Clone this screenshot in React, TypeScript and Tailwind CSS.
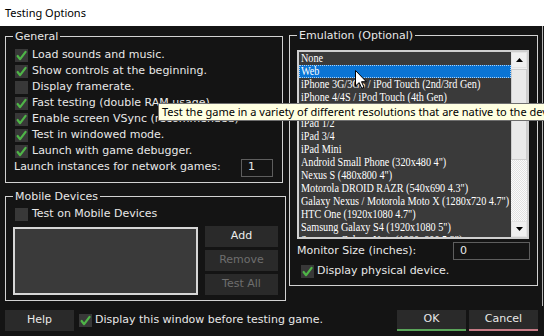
import type { ReactNode } from 'react'

const devices = [
  'None',
  'Web',
  'iPhone 3G/3GS / iPod Touch (2nd/3rd Gen)',
  'iPhone 4/4S / iPod Touch (4th Gen)',
  'iPhone 5 / iPod Touch (5th Gen)',
  'iPad 1/2',
  'iPad 3/4',
  'iPad Mini',
  'Android Small Phone (320x480 4")',
  'Nexus S (480x800 4")',
  'Motorola DROID RAZR (540x690 4.3")',
  'Galaxy Nexus / Motorola Moto X (1280x720 4.7")',
  'HTC One (1920x1080 4.7")',
  'Samsung Galaxy S4 (1920x1080 5")',
  'Samsung Galaxy Note (1280x800 5.3")',
]

const generalOptions = [
  { label: 'Load sounds and music.', checked: true },
  { label: 'Show controls at the beginning.', checked: true },
  { label: 'Display framerate.', checked: false },
  { label: 'Fast testing (double RAM usage)', checked: true },
  { label: 'Enable screen VSync (recommended)', checked: true },
  { label: 'Test in windowed mode.', checked: true },
  { label: 'Launch with game debugger.', checked: true },
]

const CheckBox = ({ checked }: { checked?: boolean }) => (
  <span className="flex h-[13px] w-[13px] shrink-0 items-center justify-center bg-[#383838]">
    {checked ? (
      <svg width="13" height="13" viewBox="0 0 13 13">
        <path
          d="M2.6 7 5.1 10.2 10.6 2.8"
          fill="none"
          stroke="#4fb548"
          strokeWidth="2.2"
          strokeLinecap="round"
          strokeLinejoin="round"
        />
      </svg>
    ) : null}
  </span>
)

const Option = ({ label, checked }: { label: string; checked?: boolean }) => (
  <div className="flex h-[16px] items-center gap-[4px] pl-[9px]">
    <CheckBox checked={checked} />
    <span className="whitespace-nowrap">{label}</span>
  </div>
)

const Group = ({ title, className, children }: { title: string; className: string; children: ReactNode }) => (
  <fieldset className={`border border-[#d2d2d2] ${className}`}>
    <legend className="ml-[7px] px-[2px] leading-[13px]">{title}</legend>
    {children}
  </fieldset>
)

const Button = ({ label, disabled, className = '' }: { label: string; disabled?: boolean; className?: string }) => (
  <button
    className={`flex h-[21px] w-[73px] items-center justify-center bg-[#2a2a2a] ${disabled ? 'text-[#6e6e6e]' : 'text-[#ececec]'} ${className}`}
  >
    {label}
  </button>
)

const Arrow = ({ up }: { up?: boolean }) => (
  <svg width="7" height="4" viewBox="0 0 7 4">
    <path d={up ? 'M0 4 3.5 0 7 4Z' : 'M0 0 3.5 4 7 0Z'} fill="#000" />
  </svg>
)

export default function App() {
  return (
    <div className="relative h-[336px] w-[544px] overflow-hidden bg-[#141414] font-['DejaVu_Sans',sans-serif] text-[11px] text-[#e8e8e8]">
      <div className="flex h-[26px] items-center bg-white pl-[5px] font-['Noto_Sans',sans-serif] text-[11px] text-black">
        Testing Options
      </div>

      <div className="flex h-[280px] w-[543px] border-r border-[#b8b8b8]">
        <div className="flex w-[286px] flex-col pl-[5px] pt-[4px]">
          <Group title="General" className="h-[153px] w-[278px]">
            <div className="pt-[4px]">
              {generalOptions.map((option) => (
                <Option key={option.label} label={option.label} checked={option.checked} />
              ))}
              <div className="-mt-px flex h-[19px] items-center pl-[8px] pr-[9px]">
                <span>Launch instances for network games:</span>
                <div className="ml-auto flex h-[18px] w-[32px] items-center border border-[#5e5e5e] pl-[6px]">1</div>
              </div>
            </div>
          </Group>

          <Group title="Mobile Devices" className="mt-[7px] h-[111px] w-[281px]">
            <div className="pt-[3px]">
              <Option label="Test on Mobile Devices" />
              <div className="mt-[4px] flex gap-[7px] pl-[7px]">
                <div className="mt-px h-[68px] w-[185px] border-2 border-[#d6d6d6] bg-[#3a3a3a]" />
                <div className="flex flex-col gap-[3px]">
                  <Button label="Add" />
                  <Button label="Remove" disabled />
                  <Button label="Test All" disabled />
                </div>
              </div>
            </div>
          </Group>
        </div>

        <div className="ml-[3px] pt-[3px]">
          <Group title="Emulation (Optional)" className="h-[257px] w-[249px]">
            <div className="pl-[7px] pr-[7px] pt-[8px]">
              <div className="flex h-[189px] w-[232px] border-2 border-[#cfcfcf] bg-[#3a3a3a]">
                <div className="h-full w-[212px] overflow-hidden font-['Liberation_Serif',serif] text-[12px] text-white">
                  {devices.map((device, i) => (
                    <div
                      key={device}
                      className={`h-[13px] leading-[11px] ${i === 1 ? 'border border-dotted border-[#a9d0f5] bg-[#0a74d4] pl-px' : 'pl-[2px] pt-px'}`}
                    >
                      <span className="inline-block origin-left scale-x-[0.85] whitespace-nowrap">{device}</span>
                    </div>
                  ))}
                </div>
                <div className="flex h-full w-[16px] flex-col bg-[#f0f0f0]">
                  <div className="flex h-[16px] items-center justify-center border border-[#e4e4e4] bg-[#f0f0f0]">
                    <Arrow up />
                  </div>
                  <div className="mt-px h-[91px] border border-[#cdcdcd] bg-[#e9e9e9]" />
                  <div className="flex-1 bg-[image:repeating-conic-gradient(#e2e2e2_0%_25%,#fbfbfb_0%_50%)] bg-[length:2px_2px]" />
                  <div className="flex h-[16px] items-center justify-center border border-[#e4e4e4] bg-[#f0f0f0]">
                    <Arrow />
                  </div>
                </div>
              </div>

              <div className="mt-[3px] flex h-[18px] items-center">
                <span>Monitor Size (inches):</span>
                <div className="ml-auto flex h-[18px] w-[77px] items-center border border-[#5e5e5e] pl-[6px]">0</div>
              </div>
              <div className="mt-[3px] flex h-[16px] items-center gap-[3px] pl-[4px]">
                <CheckBox checked />
                <span>Display physical device.</span>
              </div>
            </div>
          </Group>
        </div>
      </div>

      <div className="flex h-[21px] items-center pl-[5px] pr-[6px] pt-0 mt-[4px]">
        <button className="flex h-[21px] w-[69px] items-center justify-center bg-[#2a2a2a]">Help</button>
        <div className="ml-[5px] flex items-center gap-[3px]">
          <CheckBox checked />
          <span>Display this window before testing game.</span>
        </div>
        <button className="ml-auto flex h-[21px] w-[69px] items-center justify-center border-b-2 border-[#5aa55a] bg-[#2a2a2a]">
          OK
        </button>
        <button className="ml-[3px] flex h-[21px] w-[69px] items-center justify-center border-b-2 border-[#c77b86] bg-[#2a2a2a]">
          Cancel
        </button>
      </div>

      <div className="absolute left-[158px] top-[103px] flex h-[18px] w-[420px] items-center border border-[#6f6f6f] bg-[#ffffe1] pl-[3px] font-['Noto_Sans',sans-serif] text-[11px] whitespace-nowrap text-black">
        Test the game in a variety of different resolutions that are native to the devices.
      </div>

      <svg className="absolute left-[355px] top-[70px]" width="12" height="19" viewBox="0 0 12 19">
        <path d="M0.5 0.5V16L4.2 12.6 6.8 18.3 9 17.3 6.5 11.7H11.3Z" fill="#fff" stroke="#000" strokeWidth="1" />
      </svg>
    </div>
  )
}
